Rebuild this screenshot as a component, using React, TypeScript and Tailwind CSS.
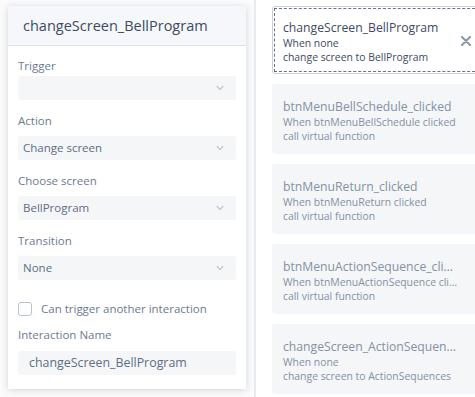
import { HiChevronDown } from 'react-icons/hi';

const font = { fontFamily: '"Open Sans", "Noto Sans", sans-serif' };

interface SelectProps {
  value?: string;
}

function Select({ value }: SelectProps) {
  return (
    <div className="flex h-6 items-center justify-between rounded-[3px] bg-[#f4f6f8] pl-[5px] pr-[9px]">
      <span className="text-[11.5px] text-[#5f6d84]">{value}</span>
      <HiChevronDown className="h-[14px] w-[14px] text-[#c3c9d2]" />
    </div>
  );
}

interface CardProps {
  title: string;
  line1: string;
  line2: string;
  selected?: boolean;
}

function Card({ title, line1, line2, selected }: CardProps) {
  if (selected) {
    return (
      <div className="relative h-[68px] w-[215px] shrink-0 rounded-[3px] border border-[#c9d0da] bg-white p-px">
        <div className="h-full border border-dashed border-[#6b7280] pl-[8px] pt-[10px]">
          <div className="w-[176px] truncate text-[12.2px] leading-[17px] text-[#3c4a64]">{title}</div>
          <div className="w-[176px] truncate text-[10.4px] leading-[14px] text-[#3c4a64]">{line1}</div>
          <div className="w-[176px] truncate text-[10.4px] leading-[14px] text-[#3c4a64]">{line2}</div>
        </div>
        <svg
          viewBox="0 0 10 10"
          className="absolute left-[188px] top-[29px] h-[10px] w-[10px] text-[#8a95a6]"
          fill="none"
          stroke="currentColor"
          strokeWidth="2"
          strokeLinecap="round"
        >
          <path d="M1 1l8 8M9 1l-8 8" />
        </svg>
      </div>
    );
  }
  return (
    <div className="h-[70px] w-[215px] shrink-0 rounded-[3px] bg-[#f4f6f8] pl-[11px] pt-[14px]">
      <div className="w-[175px] truncate text-[12.2px] leading-[17px] text-[#8591a4]">{title}</div>
      <div className="w-[175px] truncate text-[10.4px] leading-[14px] text-[#8591a4]">{line1}</div>
      <div className="w-[175px] truncate text-[10.4px] leading-[14px] text-[#8591a4]">{line2}</div>
    </div>
  );
}

export default function App() {
  return (
    <div className="flex h-[397px] w-[475px] overflow-hidden bg-[#fbfbfc]" style={font}>
      <div className="w-[254px] shrink-0 pl-2 pt-[6px]">
        <div className="h-[383px] w-[238px] bg-white shadow-[0_1px_7px_rgba(30,40,60,0.18)]">
          <div className="flex h-10 items-center border-b border-[#dde2e8] bg-[#f5f7fa] pl-[15px]">
            <h1 className="text-[14.5px] text-[#3c4a63]">changeScreen_BellProgram</h1>
          </div>
          <div className="px-[10px] text-[11.5px] text-[#6c7a8f]">
            <div className="mt-[13px] leading-[14px]">Trigger</div>
            <div className="mt-[3px]">
              <Select />
            </div>
            <div className="mt-[14px] leading-[14px]">Action</div>
            <div className="mt-[8px]">
              <Select value="Change screen" />
            </div>
            <div className="mt-[14px] leading-[14px]">Choose screen</div>
            <div className="mt-[8px]">
              <Select value="BellProgram" />
            </div>
            <div className="mt-[14px] leading-[14px]">Transition</div>
            <div className="mt-[8px]">
              <Select value="None" />
            </div>
            <div className="mt-[22px] flex items-center gap-[9px]">
              <div className="h-[14px] w-[14px] rounded-[3px] border border-[#b9c1cc] bg-white" />
              <span className="leading-[14px]">Can trigger another interaction</span>
            </div>
            <div className="mt-[12px] leading-[14px]">Interaction Name</div>
            <div className="mt-[9px] flex h-6 items-center rounded-[3px] bg-[#f4f6f8] pl-[11px]">
              <span className="text-[12.4px] text-[#5f6d84]">changeScreen_BellProgram</span>
            </div>
          </div>
        </div>
      </div>
      <div className="w-[2px] shrink-0 bg-[#e7ebf0]" />
      <div className="flex flex-1 flex-col gap-[10px] bg-white pl-[16px] pt-[6px]">
        <Card
          selected
          title="changeScreen_BellProgram"
          line1="When none"
          line2="change screen to BellProgram"
        />
        <Card
          title="btnMenuBellSchedule_clicked"
          line1="When btnMenuBellSchedule clicked"
          line2="call virtual function"
        />
        <Card
          title="btnMenuReturn_clicked"
          line1="When btnMenuReturn clicked"
          line2="call virtual function"
        />
        <Card
          title="btnMenuActionSequence_clicked"
          line1="When btnMenuActionSequence clicked"
          line2="call virtual function"
        />
        <Card
          title="changeScreen_ActionSequences"
          line1="When none"
          line2="change screen to ActionSequences"
        />
      </div>
    </div>
  );
}
